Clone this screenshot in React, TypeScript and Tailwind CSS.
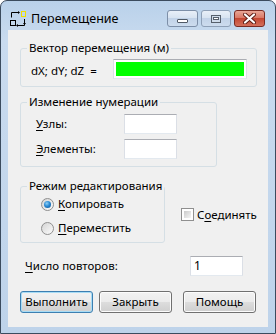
import React from "react";

const U = ({ c }: { c: string }) => <span className="underline underline-offset-2">{c}</span>;

function TextBox({ w, value, green }: { w: string; value?: string; green?: boolean }) {
  return (
    <div
      className={`${w} h-[20px] border border-[#abadb3] border-l-[#dbdfe6] border-r-[#dbdfe6] border-b-[#e3e9ef] bg-white ${green ? "p-[2px]" : ""} flex items-center`}
    >
      {green ? <div className="w-full h-full bg-[#00ff00]" /> : <span className="pl-[3px] leading-none text-[12px]">{value}</span>}
    </div>
  );
}

function Group({ title, className, children }: { title: string; className: string; children: React.ReactNode }) {
  return (
    <div className={`relative border border-[#d5dfe5] rounded-[3px] ${className}`}>
      <span className="absolute -top-[9px] left-[6px] px-[2px] bg-[#f0f0f0] leading-[16px] whitespace-nowrap">{title}</span>
      {children}
    </div>
  );
}

function Radio({ checked, children }: { checked?: boolean; children: React.ReactNode }) {
  return (
    <div className="flex items-center h-[16px]">
      <div className="w-[13px] h-[13px] rounded-full border border-[#8f8f8f] bg-gradient-to-br from-[#d4d4d4] to-[#fcfcfc] flex items-center justify-center">
        {checked && (
          <div className="w-[7px] h-[7px] rounded-full bg-[radial-gradient(circle_at_40%_35%,#8fd0f5_0%,#2a8ad4_45%,#0d4f8e_100%)]" />
        )}
      </div>
      <span className="ml-[4px]">{children}</span>
    </div>
  );
}

function Btn({ children, def }: { children: React.ReactNode; def?: boolean }) {
  return (
    <div
      className={`w-[73px] h-[22px] rounded-[3px] border ${def ? "border-[#3c7fb1] shadow-[inset_0_0_0_1px_#a8dcf5]" : "border-[#707070] shadow-[inset_0_0_0_1px_#fcfcfc]"} bg-[linear-gradient(#f2f2f2_0%,#ebebeb_50%,#dddddd_50%,#cfcfcf_100%)] flex items-center justify-center`}
    >
      {children}
    </div>
  );
}

export default function App() {
  return (
    <div className="w-[276px] h-[334px] font-['Noto_Sans'] text-[11.5px] leading-[16px] text-black">
      <div className="w-full h-full border border-[#3b4b5e] rounded-t-[7px] bg-[linear-gradient(#b9d1ea,#c9dbef_40px,#bed3ea)] flex flex-col">
        {/* Title bar */}
        <div className="h-[29px] flex items-start shrink-0">
          <svg width="16" height="16" viewBox="0 0 16 16" className="ml-[9px] mt-[10px]">
            <path d="M1.5 6.5V1.5H8" stroke="#000" fill="none" />
            <path d="M8 0L10 1.5L8 3Z" fill="#000" />
            <rect x="11.5" y="0.5" width="4" height="5" stroke="#f0e000" fill="none" />
            <rect x="0.5" y="9.5" width="5" height="5" stroke="#000" fill="none" />
            <path d="M14.5 8V14.5H8" stroke="#000" fill="none" />
            <path d="M8 13L6 14.5L8 16Z" fill="#000" />
            <path d="M13 12L14.5 14L16 12Z" fill="#000" />
          </svg>
          <span className="ml-[5px] mt-[10px] leading-[16px] text-[12.5px]">Перемещение</span>
          <div className="ml-auto mr-[10px] mt-[9px] flex gap-[3px]">
            <div className="w-[31px] h-[17px] rounded-[3px] border border-[#7d8fa8] bg-[linear-gradient(#e8eff8,#d6e2f0_50%,#c2d3e8_50%,#cddcee)] flex items-end justify-center pb-[3px]">
              <div className="w-[11px] h-[4px] border border-[#505a66] bg-white rounded-[1px]" />
            </div>
            <div className="w-[30px] h-[17px] rounded-[3px] border border-[#8ea0b7] bg-[linear-gradient(#e8eff8,#d6e2f0_50%,#c2d3e8_50%,#cddcee)] flex items-center justify-center">
              <div className="w-[10px] h-[8px] border border-[#56606c] bg-[#cfdceb] flex items-center justify-center">
                <div className="w-[6px] h-[3px] border border-[#56606c] bg-white" />
              </div>
            </div>
            <div className="w-[31px] h-[17px] rounded-[3px] border border-[#7a2b23] bg-[linear-gradient(#e8a696,#d87462_50%,#c44833_50%,#d4705c)] flex items-center justify-center">
              <svg width="13" height="11" viewBox="0 0 13 11">
                <path d="M2 1.5L11 9.5M11 1.5L2 9.5" stroke="#5a1a12" strokeWidth="4" strokeLinecap="round" />
                <path d="M2 1.5L11 9.5M11 1.5L2 9.5" stroke="#fff" strokeWidth="2.2" strokeLinecap="round" />
              </svg>
            </div>
          </div>
        </div>

        {/* Client area */}
        <div className="mx-[7px] flex-1 bg-[#f0f0f0] flex flex-col">
          <Group title="Вектор перемещения (м)" className="mt-[18px] ml-[12px] w-[237px] pl-[10px] pr-[9px] pt-[10px] pb-[7px]">
            <div className="flex items-center justify-between">
              <span className="mt-[3px]">dX; dY; dZ&nbsp; =</span>
              <TextBox w="w-[134px]" green />
            </div>
          </Group>

          <Group title="Изменение нумерации" className="mt-[15px] ml-[12px] w-[197px] pl-[15px] pr-[39px] pt-[11px] pb-[7px]">
            <div className="flex flex-col gap-[5px]">
              <div className="flex items-center justify-between">
                <span><U c="У" />злы:</span>
                <TextBox w="w-[53px]" />
              </div>
              <div className="flex items-center justify-between">
                <span><U c="Э" />лементы:</span>
                <TextBox w="w-[53px]" />
              </div>
            </div>
          </Group>

          <div className="mt-[19px] ml-[12px] flex items-center">
            <Group title="Режим редактирования" className="w-[145px] pl-[20px] pt-[9px] pb-[6px]">
              <div className="flex flex-col gap-[8px]">
                <Radio checked><U c="К" />опировать</Radio>
                <Radio><U c="П" />ереместить</Radio>
              </div>
            </Group>
            <div className="ml-[16px] flex items-center">
              <div className="w-[13px] h-[13px] border border-[#8f8f8f] bg-white p-[2px]">
                <div className="w-full h-full bg-gradient-to-br from-[#cbcbcb] to-[#f6f6f6]" />
              </div>
              <span className="ml-[3px]">С<U c="о" />единять</span>
            </div>
          </div>

          <div className="mt-[13px] ml-[17px] w-[218px] flex items-center justify-between">
            <span><U c="Ч" />исло повторов:</span>
            <TextBox w="w-[53px]" value="1" />
          </div>

          <div className="mt-[15px] ml-[12px] flex">
            <Btn def>Выполнить</Btn>
            <div className="ml-[6px]"><Btn>Закрыть</Btn></div>
            <div className="ml-[11px]"><Btn>Помощь</Btn></div>
          </div>
        </div>
        <div className="h-[6px] shrink-0" />
      </div>
    </div>
  );
}
